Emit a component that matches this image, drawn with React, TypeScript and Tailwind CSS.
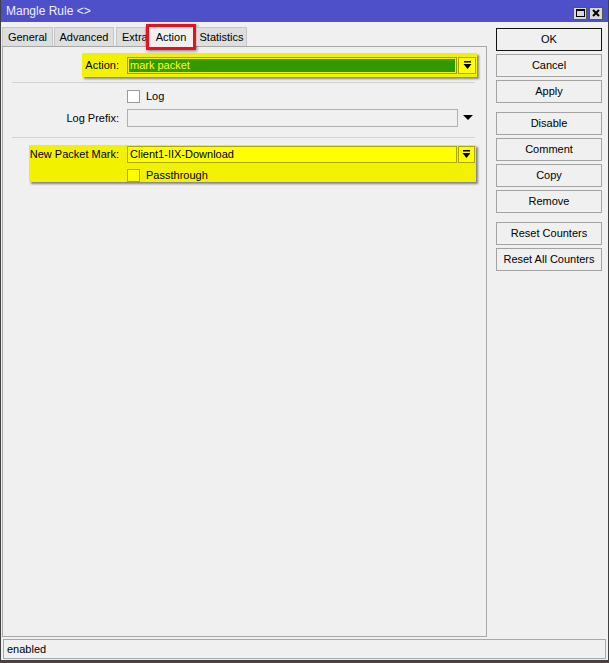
import React from "react";

const DropArrow = () => (
  <svg width="9" height="9" viewBox="0 0 9 9">
    <rect x="1" y="0" width="7" height="1.5" fill="#000" />
    <polygon points="0.5,3 8.5,3 4.5,8" fill="#000" />
  </svg>
);

const Btn = ({ label, def }: { label: string; def?: boolean }) => (
  <div
    className={
      "h-[23px] w-[106px] flex items-center justify-center bg-[#f0f0f0] border " +
      (def ? "border-[#111]" : "border-[#a3a3a3]")
    }
  >
    {label}
  </div>
);

export default function App() {
  return (
    <div
      className="w-[609px] h-[663px] flex flex-col bg-[#5a3c3c] text-[11px] text-black"
      style={{ fontFamily: '"Liberation Sans", Arial, sans-serif' }}
    >
      <div className="h-[661px] flex flex-col bg-[#f0f0f0] border-x border-b border-[#404040]">
        {/* title bar */}
        <div className="h-[22px] shrink-0 bg-[#4e50c9] flex items-center pl-[5px] pr-[5px] text-[#eef] text-[12px]">
          <span>Mangle Rule &lt;&gt;</span>
          <div className="ml-auto flex gap-[2px] mt-[4px]">
            <div className="w-[14px] h-[13px] bg-[#d8d8d8] border border-[#555] flex items-center justify-center">
              <div className="w-[9px] h-[8px] border border-black border-t-2" />
            </div>
            <div className="w-[14px] h-[13px] bg-[#d8d8d8] border border-[#555] flex items-center justify-center">
              <svg width="8" height="8" viewBox="0 0 8 8">
                <path d="M1 1L7 7M7 1L1 7" stroke="#000" strokeWidth="2" />
              </svg>
            </div>
          </div>
        </div>

        {/* body */}
        <div className="flex flex-1 min-h-0">
          <div className="w-[485px] ml-[1px] flex flex-col">
            {/* tabs */}
            <div className="h-[24px] flex items-end relative z-10">
              <div className="h-[19px] w-[51px] flex items-center justify-center bg-[#dedede] border border-b-0 border-[#c6c6c6]">General</div>
              <div className="h-[19px] w-[60px] ml-[1px] flex items-center justify-center bg-[#dedede] border border-b-0 border-[#c6c6c6]">Advanced</div>
              <div className="h-[19px] w-[30px] ml-[2px] flex items-center justify-start pl-[5px] bg-[#dedede] border border-b-0 border-[#c6c6c6]">Extra</div>
              <div className="h-[26px] w-[50px] -mb-[4px] border-[3px] border-[#e8101a] shadow-[1px_1px_3px_rgba(0,0,0,0.5)] bg-[#f0f0f0] flex items-start justify-center pt-[2px]">
                <span>Action</span>
              </div>
              <div className="h-[19px] w-[51px] flex items-center justify-center bg-[#dedede] border border-b-0 border-[#c6c6c6]">Statistics</div>
            </div>
            {/* panel */}
            <div className="flex-1 border border-[#a8a8a8] flex flex-col">
              {/* action box */}
              <div className="mt-[6px] ml-[79px] w-[395px] h-[24px] bg-[#f2f200] shadow-[2px_2px_2px_rgba(0,0,0,0.45)] flex items-center">
                <div className="w-[37px] text-right">Action:</div>
                <div className="ml-[8px] w-[330px] h-[17px] bg-[#339900] border border-[#9a9a00] shadow-[inset_0_0_0_1px_#f0f000] text-[#ffff00] flex items-center pl-[2px]">
                  mark packet
                </div>
                <div className="ml-[1px] w-[18px] h-[17px] bg-[#ffff00] border border-[#a8a800] flex items-center justify-center">
                  <DropArrow />
                </div>
              </div>
              <div className="mt-[5px] ml-[9px] w-[463px] h-px bg-[#d2d2d2]" />
              {/* log */}
              <div className="mt-[7px] ml-[124px] flex items-center h-[13px]">
                <div className="w-[13px] h-[13px] bg-white border border-[#9a9a9a]" />
                <span className="ml-[6px]">Log</span>
              </div>
              <div className="mt-[6px] flex items-center h-[18px]">
                <div className="w-[116px] text-right">Log Prefix:</div>
                <div className="ml-[8px] w-[331px] h-[18px] bg-[#f0f0f0] border border-[#b0b0b0]" />
                <svg className="ml-[5px]" width="10" height="6" viewBox="0 0 10 6">
                  <polygon points="0,0 10,0 5,5" fill="#000" />
                </svg>
              </div>
              <div className="mt-[10px] ml-[9px] w-[463px] h-px bg-[#d2d2d2]" />
              {/* new packet mark box */}
              <div className="mt-[7px] ml-[26px] w-[447px] h-[37px] bg-[#f2f200] shadow-[2px_2px_2px_rgba(0,0,0,0.45)] flex flex-col">
                <div className="mt-[1px] flex items-center h-[17px]">
                  <div className="w-[90px] text-right">New Packet Mark:</div>
                  <div className="ml-[8px] w-[330px] h-[17px] bg-[#ffff00] border border-[#a8a800] flex items-center pl-[2px]">
                    Client1-IIX-Download
                  </div>
                  <div className="ml-[1px] w-[17px] h-[17px] bg-[#ffff00] border border-[#a8a800] flex items-center justify-center">
                    <DropArrow />
                  </div>
                </div>
                <div className="mt-[6px] ml-[98px] flex items-center h-[13px]">
                  <div className="w-[13px] h-[13px] bg-[#ffff00] border border-[#a8a800]" />
                  <span className="ml-[6px]">Passthrough</span>
                </div>
              </div>
            </div>
          </div>

          {/* right buttons */}
          <div className="ml-[9px] mt-[6px] flex flex-col">
            <div className="flex flex-col gap-[3px]">
              <Btn label="OK" def />
              <Btn label="Cancel" />
              <Btn label="Apply" />
            </div>
            <div className="mt-[9px] flex flex-col gap-[3px]">
              <Btn label="Disable" />
              <Btn label="Comment" />
              <Btn label="Copy" />
              <Btn label="Remove" />
            </div>
            <div className="mt-[9px] flex flex-col gap-[3px]">
              <Btn label="Reset Counters" />
              <Btn label="Reset All Counters" />
            </div>
          </div>
        </div>

        {/* status bar */}
        <div className="mt-[2px] mb-[1px] mx-[2px] h-[20px] shrink-0 border border-[#a8a8a8] flex items-center pl-[3px]">
          enabled
        </div>
      </div>
    </div>
  );
}
